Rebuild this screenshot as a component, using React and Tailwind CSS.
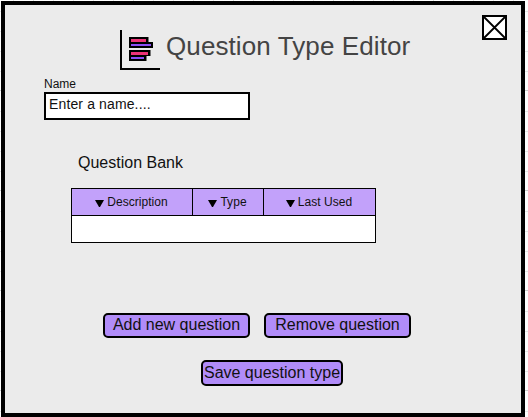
import React from "react";

function ChartIcon() {
  return (
    <svg width="40" height="40" viewBox="0 0 40 40" shapeRendering="crispEdges" className="shrink-0">
      <path d="M0 0h2v38h38v2H0z" fill="#000" />
      <path d="M28 7h1v5h-1zM30 20h1v6h-1zM26 26h1v5h-1z" fill="#777" />
      <path d="M9 7h19v5h5v6H9zM9 20h21v6h-4v5H9z" fill="#000" />
      <path d="M11 9h15v3H11zM11 22h17v3H11z" fill="#ee3377" />
      <path d="M11 14h20v2H11zM11 27h13v2H11z" fill="#8c4ff5" />
    </svg>
  );
}

function CloseButton() {
  return (
    <button aria-label="Close" className="ml-auto h-[25px] w-[25px] shrink-0">
      <svg width="25" height="25" viewBox="0 0 25 25">
        <rect x="1" y="1" width="23" height="23" fill="#fff" stroke="#000" strokeWidth="2" />
        <path d="M2 2L23 23M23 2L2 23" stroke="#000" strokeWidth="1.8" />
      </svg>
    </button>
  );
}

function HeaderCell({ children }) {
  return (
    <div className="flex items-center justify-center gap-[3px] bg-[#c2a1fa] pr-px text-xs tracking-[0.05px] text-[#111]">
      <svg width="9" height="7" viewBox="0 0 9 7" className="mt-[3px]">
        <path d="M0 0h9L5 7H4z" fill="#000" />
      </svg>
      <span>{children}</span>
    </div>
  );
}

function ActionButton({ className, children }) {
  return (
    <button className={`flex items-center justify-center whitespace-nowrap rounded-[5px] border-2 border-black bg-[#b18cf9] text-base text-[#111] ${className}`}>
      {children}
    </button>
  );
}

export default function App() {
  return (
    <div className="h-[417px] w-[528px] overflow-hidden bg-white bg-[linear-gradient(to_bottom,#d0d0d0_1px,transparent_1px_21px,#e8e8e8_21px_22px,transparent_22px_41px,#e8e8e8_41px_42px,transparent_42px_61px,#e8e8e8_61px_62px,transparent_62px_81px,#e8e8e8_81px_82px,transparent_82px),linear-gradient(to_right,#d8e0dc_1px,transparent_1px_20px,#e8e8e8_20px_21px,transparent_21px_40px,#e8e8e8_40px_41px,transparent_41px_60px,#e8e8e8_60px_61px,transparent_61px_80px,#e8e8e8_80px_81px,transparent_81px)] bg-[size:100px_100px] bg-[position:33px_90px] pl-px pt-px font-['Liberation_Sans',Arial,sans-serif]">
      <main className="h-[416px] w-[524px] border-4 border-black bg-[#ebebeb]">
        <header className="flex h-[65px] items-start pl-[115px] pr-[14px] pt-[10px]">
          <div className="flex pt-[15px]">
            <ChartIcon />
            <h1 className="ml-[6px] whitespace-nowrap text-[26px] leading-8 tracking-[0.1px] text-[#444]">Question Type Editor</h1>
          </div>
          <CloseButton />
        </header>
        <label className="ml-[39px] mt-[6px] block text-xs leading-4 text-[#111]">Name
          <input
            className="block h-7 w-[206px] border-2 border-black bg-white px-[3px] pb-1 text-sm tracking-[0.13px] text-[#111] placeholder:text-[#111] placeholder:opacity-100"
            placeholder="Enter a name...."
          />
        </label>
        <h2 className="ml-[73px] mt-[31px] text-base leading-6 text-[#111]">Question Bank</h2>
        <div className="ml-[66px] mt-[13px] grid h-[55px] w-[305px] grid-cols-[120px_70px_111px] grid-rows-[26px_26px] gap-px border border-black bg-black">
          <HeaderCell>Description</HeaderCell>
          <HeaderCell>Type</HeaderCell>
          <HeaderCell>Last Used</HeaderCell>
          <div className="col-span-3 bg-white" />
        </div>
        <div className="ml-[98px] mt-[70px] flex gap-[14px]">
          <ActionButton className="h-[25px] w-[147px] pb-[2px]">Add new question</ActionButton>
          <ActionButton className="h-[25px] w-[147px] pb-[2px]">Remove question</ActionButton>
        </div>
        <ActionButton className="ml-[196px] mt-[22px] h-[26px] w-[142px]">Save question type</ActionButton>
      </main>
    </div>
  );
}
